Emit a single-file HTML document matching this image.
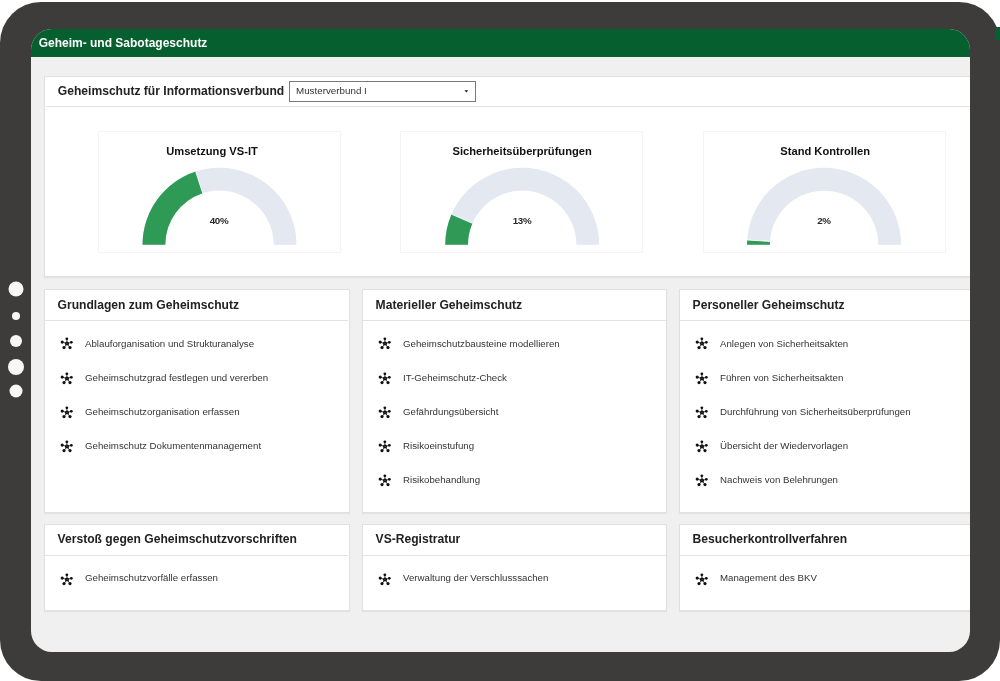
<!DOCTYPE html>
<html><head><meta charset="utf-8">
<style>
*{box-sizing:border-box;margin:0;padding:0}
html,body{width:1000px;height:681px;overflow:hidden;background:#fff;font-family:"Liberation Sans",sans-serif}
body{will-change:transform;-webkit-font-smoothing:antialiased}
.abs{position:absolute}
#frame{position:absolute;left:0;top:2px;width:1000px;height:679px;background:#3d3c3a;border-radius:41px}
#sliver{position:absolute;left:995px;top:27px;width:5px;height:13px;background:#055f2e}
#screen{position:absolute;left:31px;top:29px;width:939px;height:623px;background:#f0f0f0;border-radius:21px;overflow:hidden}
#hdr{position:absolute;left:0;top:0;width:939px;height:28.4px;background:#055f2e}
#hdr span{position:absolute;left:7.7px;top:7.7px;font-size:12px;font-weight:bold;color:#fff;line-height:12px;white-space:nowrap}
.panel{position:absolute;background:#fff;border:1px solid #e0e0e0;box-shadow:0 1px 1px rgba(0,0,0,0.05)}
.t12{font-size:12.1px;font-weight:bold;color:#222;white-space:nowrap;position:absolute;line-height:14px}
.t11{font-size:11.15px;font-weight:bold;color:#111;white-space:nowrap;position:absolute;line-height:13px}
.it{font-size:9.7px;color:#333;white-space:nowrap;position:absolute;line-height:12px}
.hline{position:absolute;height:1px;background:#e2e2e2}
.gcard{position:absolute;background:#fff;border:1px solid #f4f4f4}
.pct{position:absolute;font-size:9.8px;font-weight:bold;color:#2a2a2a;line-height:10px;white-space:nowrap;text-align:center;width:40px;letter-spacing:-0.35px}
</style></head><body>
<div id="frame"></div>
<div id="sliver"></div>
<svg class="abs" style="left:0;top:270px" width="32" height="140"><g fill="#f7f7f5"><circle cx="16" cy="19" r="7.5"/><circle cx="16" cy="46" r="4"/><circle cx="16" cy="71" r="6"/><circle cx="16" cy="97" r="8"/><circle cx="16" cy="121" r="6.5"/></g></svg>
<div id="screen">
  <div id="hdr"><span>Geheim- und Sabotageschutz</span></div>
</div>
<div class="panel" style="left:44px;top:76px;width:930px;height:201px"></div>
<div class="hline" style="left:46px;top:106px;width:924px"></div>
<div class="t12" style="left:57.8px;top:84px">Geheimschutz für Informationsverbund</div>
<div class="abs" style="left:289px;top:81px;width:187px;height:21px;border:1px solid #7a7a7a;background:#fff"></div>
<div class="it" style="left:296px;top:85.1px;color:#333;font-size:9.8px">Musterverbund I</div>
<svg class="abs" style="left:464px;top:90px" width="5" height="3"><path d="M0.5 0.2H4.1L2.3 2.4Z" fill="#111"/></svg>
<div class="gcard" style="left:98px;top:131px;width:243px;height:122px"></div>
<div class="gcard" style="left:400px;top:131px;width:243px;height:122px"></div>
<div class="gcard" style="left:703px;top:131px;width:243px;height:122px"></div>
<div class="t11" style="left:166.2px;top:144.7px">Umsetzung VS-IT</div>
<div class="t11" style="left:452.5px;top:144.5px">Sicherheitsüberprüfungen</div>
<div class="t11" style="left:780.3px;top:145.4px">Stand Kontrollen</div>
<svg class="abs" style="left:0;top:0" width="1000" height="681">
<path d="M142.50 244.80 A77 77 0 0 1 296.50 244.80 L273.70 244.80 A54.2 54.2 0 0 0 165.30 244.80 Z" fill="#e3e8f1"/>
<path d="M142.50 244.80 A77 77 0 0 1 195.71 171.57 L202.75 193.25 A54.2 54.2 0 0 0 165.30 244.80 Z" fill="#2e9a55"/>
<line x1="195.71" y1="171.57" x2="202.75" y2="193.25" stroke="#fff" stroke-width="0.9"/>
<path d="M445.20 244.80 A77 77 0 0 1 599.20 244.80 L576.40 244.80 A54.2 54.2 0 0 0 468.00 244.80 Z" fill="#e3e8f1"/>
<path d="M445.20 244.80 A77 77 0 0 1 451.53 214.22 L472.46 223.27 A54.2 54.2 0 0 0 468.00 244.80 Z" fill="#2e9a55"/>
<line x1="451.53" y1="214.22" x2="472.46" y2="223.27" stroke="#fff" stroke-width="0.9"/>
<path d="M747.10 244.80 A77 77 0 0 1 901.10 244.80 L878.30 244.80 A54.2 54.2 0 0 0 769.90 244.80 Z" fill="#e3e8f1"/>
<path d="M747.10 244.80 A77 77 0 0 1 747.25 239.97 L770.01 241.40 A54.2 54.2 0 0 0 769.90 244.80 Z" fill="#2e9a55"/>
<line x1="747.25" y1="239.97" x2="770.01" y2="241.40" stroke="#fff" stroke-width="0.9"/>
</svg>
<div class="pct" style="left:199px;top:215.6px">40%</div>
<div class="pct" style="left:502px;top:215.6px">13%</div>
<div class="pct" style="left:804px;top:215.6px">2%</div>
<div class="panel" style="left:44px;top:289px;width:306px;height:224px"></div>
<div class="hline" style="left:45px;top:320px;width:303px"></div>
<div class="t12" style="left:57.6px;top:297.6px">Grundlagen zum Geheimschutz</div>
<svg class="abs" style="left:60.1px;top:336.3px" width="14" height="14" viewBox="0 0 14 14"><g stroke="#333" stroke-width="0.9"><line x1="7" y1="7.5" x2="6.85" y2="2.80"/><line x1="7" y1="7.5" x2="2.20" y2="6.10"/><line x1="7" y1="7.5" x2="11.30" y2="6.30"/><line x1="7" y1="7.5" x2="4.00" y2="11.60"/><line x1="7" y1="7.5" x2="10.00" y2="11.60"/></g><g fill="#111"><circle cx="6.85" cy="2.80" r="1.4"/><circle cx="2.20" cy="6.10" r="1.55"/><circle cx="11.30" cy="6.30" r="1.4"/><circle cx="4.00" cy="11.60" r="1.6"/><circle cx="10.00" cy="11.60" r="1.6"/><circle cx="7" cy="7.5" r="2.05"/></g><circle cx="7" cy="7.5" r="0.6" fill="#555"/></svg>
<div class="it" style="left:85px;top:337.8px">Ablauforganisation und Strukturanalyse</div>
<svg class="abs" style="left:60.1px;top:370.5px" width="14" height="14" viewBox="0 0 14 14"><g stroke="#333" stroke-width="0.9"><line x1="7" y1="7.5" x2="6.85" y2="2.80"/><line x1="7" y1="7.5" x2="2.20" y2="6.10"/><line x1="7" y1="7.5" x2="11.30" y2="6.30"/><line x1="7" y1="7.5" x2="4.00" y2="11.60"/><line x1="7" y1="7.5" x2="10.00" y2="11.60"/></g><g fill="#111"><circle cx="6.85" cy="2.80" r="1.4"/><circle cx="2.20" cy="6.10" r="1.55"/><circle cx="11.30" cy="6.30" r="1.4"/><circle cx="4.00" cy="11.60" r="1.6"/><circle cx="10.00" cy="11.60" r="1.6"/><circle cx="7" cy="7.5" r="2.05"/></g><circle cx="7" cy="7.5" r="0.6" fill="#555"/></svg>
<div class="it" style="left:85px;top:371.9px">Geheimschutzgrad festlegen und vererben</div>
<svg class="abs" style="left:60.1px;top:404.7px" width="14" height="14" viewBox="0 0 14 14"><g stroke="#333" stroke-width="0.9"><line x1="7" y1="7.5" x2="6.85" y2="2.80"/><line x1="7" y1="7.5" x2="2.20" y2="6.10"/><line x1="7" y1="7.5" x2="11.30" y2="6.30"/><line x1="7" y1="7.5" x2="4.00" y2="11.60"/><line x1="7" y1="7.5" x2="10.00" y2="11.60"/></g><g fill="#111"><circle cx="6.85" cy="2.80" r="1.4"/><circle cx="2.20" cy="6.10" r="1.55"/><circle cx="11.30" cy="6.30" r="1.4"/><circle cx="4.00" cy="11.60" r="1.6"/><circle cx="10.00" cy="11.60" r="1.6"/><circle cx="7" cy="7.5" r="2.05"/></g><circle cx="7" cy="7.5" r="0.6" fill="#555"/></svg>
<div class="it" style="left:85px;top:405.9px">Geheimschutzorganisation erfassen</div>
<svg class="abs" style="left:60.1px;top:438.9px" width="14" height="14" viewBox="0 0 14 14"><g stroke="#333" stroke-width="0.9"><line x1="7" y1="7.5" x2="6.85" y2="2.80"/><line x1="7" y1="7.5" x2="2.20" y2="6.10"/><line x1="7" y1="7.5" x2="11.30" y2="6.30"/><line x1="7" y1="7.5" x2="4.00" y2="11.60"/><line x1="7" y1="7.5" x2="10.00" y2="11.60"/></g><g fill="#111"><circle cx="6.85" cy="2.80" r="1.4"/><circle cx="2.20" cy="6.10" r="1.55"/><circle cx="11.30" cy="6.30" r="1.4"/><circle cx="4.00" cy="11.60" r="1.6"/><circle cx="10.00" cy="11.60" r="1.6"/><circle cx="7" cy="7.5" r="2.05"/></g><circle cx="7" cy="7.5" r="0.6" fill="#555"/></svg>
<div class="it" style="left:85px;top:439.9px">Geheimschutz Dokumentenmanagement</div>
<div class="panel" style="left:362px;top:289px;width:305px;height:224px"></div>
<div class="hline" style="left:363px;top:320px;width:303px"></div>
<div class="t12" style="left:375.6px;top:297.6px">Materieller Geheimschutz</div>
<svg class="abs" style="left:378.1px;top:336.3px" width="14" height="14" viewBox="0 0 14 14"><g stroke="#333" stroke-width="0.9"><line x1="7" y1="7.5" x2="6.85" y2="2.80"/><line x1="7" y1="7.5" x2="2.20" y2="6.10"/><line x1="7" y1="7.5" x2="11.30" y2="6.30"/><line x1="7" y1="7.5" x2="4.00" y2="11.60"/><line x1="7" y1="7.5" x2="10.00" y2="11.60"/></g><g fill="#111"><circle cx="6.85" cy="2.80" r="1.4"/><circle cx="2.20" cy="6.10" r="1.55"/><circle cx="11.30" cy="6.30" r="1.4"/><circle cx="4.00" cy="11.60" r="1.6"/><circle cx="10.00" cy="11.60" r="1.6"/><circle cx="7" cy="7.5" r="2.05"/></g><circle cx="7" cy="7.5" r="0.6" fill="#555"/></svg>
<div class="it" style="left:403px;top:337.8px">Geheimschutzbausteine modellieren</div>
<svg class="abs" style="left:378.1px;top:370.5px" width="14" height="14" viewBox="0 0 14 14"><g stroke="#333" stroke-width="0.9"><line x1="7" y1="7.5" x2="6.85" y2="2.80"/><line x1="7" y1="7.5" x2="2.20" y2="6.10"/><line x1="7" y1="7.5" x2="11.30" y2="6.30"/><line x1="7" y1="7.5" x2="4.00" y2="11.60"/><line x1="7" y1="7.5" x2="10.00" y2="11.60"/></g><g fill="#111"><circle cx="6.85" cy="2.80" r="1.4"/><circle cx="2.20" cy="6.10" r="1.55"/><circle cx="11.30" cy="6.30" r="1.4"/><circle cx="4.00" cy="11.60" r="1.6"/><circle cx="10.00" cy="11.60" r="1.6"/><circle cx="7" cy="7.5" r="2.05"/></g><circle cx="7" cy="7.5" r="0.6" fill="#555"/></svg>
<div class="it" style="left:403px;top:371.9px">IT-Geheimschutz-Check</div>
<svg class="abs" style="left:378.1px;top:404.7px" width="14" height="14" viewBox="0 0 14 14"><g stroke="#333" stroke-width="0.9"><line x1="7" y1="7.5" x2="6.85" y2="2.80"/><line x1="7" y1="7.5" x2="2.20" y2="6.10"/><line x1="7" y1="7.5" x2="11.30" y2="6.30"/><line x1="7" y1="7.5" x2="4.00" y2="11.60"/><line x1="7" y1="7.5" x2="10.00" y2="11.60"/></g><g fill="#111"><circle cx="6.85" cy="2.80" r="1.4"/><circle cx="2.20" cy="6.10" r="1.55"/><circle cx="11.30" cy="6.30" r="1.4"/><circle cx="4.00" cy="11.60" r="1.6"/><circle cx="10.00" cy="11.60" r="1.6"/><circle cx="7" cy="7.5" r="2.05"/></g><circle cx="7" cy="7.5" r="0.6" fill="#555"/></svg>
<div class="it" style="left:403px;top:405.9px">Gefährdungsübersicht</div>
<svg class="abs" style="left:378.1px;top:438.9px" width="14" height="14" viewBox="0 0 14 14"><g stroke="#333" stroke-width="0.9"><line x1="7" y1="7.5" x2="6.85" y2="2.80"/><line x1="7" y1="7.5" x2="2.20" y2="6.10"/><line x1="7" y1="7.5" x2="11.30" y2="6.30"/><line x1="7" y1="7.5" x2="4.00" y2="11.60"/><line x1="7" y1="7.5" x2="10.00" y2="11.60"/></g><g fill="#111"><circle cx="6.85" cy="2.80" r="1.4"/><circle cx="2.20" cy="6.10" r="1.55"/><circle cx="11.30" cy="6.30" r="1.4"/><circle cx="4.00" cy="11.60" r="1.6"/><circle cx="10.00" cy="11.60" r="1.6"/><circle cx="7" cy="7.5" r="2.05"/></g><circle cx="7" cy="7.5" r="0.6" fill="#555"/></svg>
<div class="it" style="left:403px;top:439.9px">Risikoeinstufung</div>
<svg class="abs" style="left:378.1px;top:473.1px" width="14" height="14" viewBox="0 0 14 14"><g stroke="#333" stroke-width="0.9"><line x1="7" y1="7.5" x2="6.85" y2="2.80"/><line x1="7" y1="7.5" x2="2.20" y2="6.10"/><line x1="7" y1="7.5" x2="11.30" y2="6.30"/><line x1="7" y1="7.5" x2="4.00" y2="11.60"/><line x1="7" y1="7.5" x2="10.00" y2="11.60"/></g><g fill="#111"><circle cx="6.85" cy="2.80" r="1.4"/><circle cx="2.20" cy="6.10" r="1.55"/><circle cx="11.30" cy="6.30" r="1.4"/><circle cx="4.00" cy="11.60" r="1.6"/><circle cx="10.00" cy="11.60" r="1.6"/><circle cx="7" cy="7.5" r="2.05"/></g><circle cx="7" cy="7.5" r="0.6" fill="#555"/></svg>
<div class="it" style="left:403px;top:474.0px">Risikobehandlung</div>
<div class="panel" style="left:679px;top:289px;width:305px;height:224px"></div>
<div class="hline" style="left:680px;top:320px;width:303px"></div>
<div class="t12" style="left:692.6px;top:297.6px">Personeller Geheimschutz</div>
<svg class="abs" style="left:695.1px;top:336.3px" width="14" height="14" viewBox="0 0 14 14"><g stroke="#333" stroke-width="0.9"><line x1="7" y1="7.5" x2="6.85" y2="2.80"/><line x1="7" y1="7.5" x2="2.20" y2="6.10"/><line x1="7" y1="7.5" x2="11.30" y2="6.30"/><line x1="7" y1="7.5" x2="4.00" y2="11.60"/><line x1="7" y1="7.5" x2="10.00" y2="11.60"/></g><g fill="#111"><circle cx="6.85" cy="2.80" r="1.4"/><circle cx="2.20" cy="6.10" r="1.55"/><circle cx="11.30" cy="6.30" r="1.4"/><circle cx="4.00" cy="11.60" r="1.6"/><circle cx="10.00" cy="11.60" r="1.6"/><circle cx="7" cy="7.5" r="2.05"/></g><circle cx="7" cy="7.5" r="0.6" fill="#555"/></svg>
<div class="it" style="left:720px;top:337.8px">Anlegen von Sicherheitsakten</div>
<svg class="abs" style="left:695.1px;top:370.5px" width="14" height="14" viewBox="0 0 14 14"><g stroke="#333" stroke-width="0.9"><line x1="7" y1="7.5" x2="6.85" y2="2.80"/><line x1="7" y1="7.5" x2="2.20" y2="6.10"/><line x1="7" y1="7.5" x2="11.30" y2="6.30"/><line x1="7" y1="7.5" x2="4.00" y2="11.60"/><line x1="7" y1="7.5" x2="10.00" y2="11.60"/></g><g fill="#111"><circle cx="6.85" cy="2.80" r="1.4"/><circle cx="2.20" cy="6.10" r="1.55"/><circle cx="11.30" cy="6.30" r="1.4"/><circle cx="4.00" cy="11.60" r="1.6"/><circle cx="10.00" cy="11.60" r="1.6"/><circle cx="7" cy="7.5" r="2.05"/></g><circle cx="7" cy="7.5" r="0.6" fill="#555"/></svg>
<div class="it" style="left:720px;top:371.9px">Führen von Sicherheitsakten</div>
<svg class="abs" style="left:695.1px;top:404.7px" width="14" height="14" viewBox="0 0 14 14"><g stroke="#333" stroke-width="0.9"><line x1="7" y1="7.5" x2="6.85" y2="2.80"/><line x1="7" y1="7.5" x2="2.20" y2="6.10"/><line x1="7" y1="7.5" x2="11.30" y2="6.30"/><line x1="7" y1="7.5" x2="4.00" y2="11.60"/><line x1="7" y1="7.5" x2="10.00" y2="11.60"/></g><g fill="#111"><circle cx="6.85" cy="2.80" r="1.4"/><circle cx="2.20" cy="6.10" r="1.55"/><circle cx="11.30" cy="6.30" r="1.4"/><circle cx="4.00" cy="11.60" r="1.6"/><circle cx="10.00" cy="11.60" r="1.6"/><circle cx="7" cy="7.5" r="2.05"/></g><circle cx="7" cy="7.5" r="0.6" fill="#555"/></svg>
<div class="it" style="left:720px;top:405.9px">Durchführung von Sicherheitsüberprüfungen</div>
<svg class="abs" style="left:695.1px;top:438.9px" width="14" height="14" viewBox="0 0 14 14"><g stroke="#333" stroke-width="0.9"><line x1="7" y1="7.5" x2="6.85" y2="2.80"/><line x1="7" y1="7.5" x2="2.20" y2="6.10"/><line x1="7" y1="7.5" x2="11.30" y2="6.30"/><line x1="7" y1="7.5" x2="4.00" y2="11.60"/><line x1="7" y1="7.5" x2="10.00" y2="11.60"/></g><g fill="#111"><circle cx="6.85" cy="2.80" r="1.4"/><circle cx="2.20" cy="6.10" r="1.55"/><circle cx="11.30" cy="6.30" r="1.4"/><circle cx="4.00" cy="11.60" r="1.6"/><circle cx="10.00" cy="11.60" r="1.6"/><circle cx="7" cy="7.5" r="2.05"/></g><circle cx="7" cy="7.5" r="0.6" fill="#555"/></svg>
<div class="it" style="left:720px;top:439.9px">Übersicht der Wiedervorlagen</div>
<svg class="abs" style="left:695.1px;top:473.1px" width="14" height="14" viewBox="0 0 14 14"><g stroke="#333" stroke-width="0.9"><line x1="7" y1="7.5" x2="6.85" y2="2.80"/><line x1="7" y1="7.5" x2="2.20" y2="6.10"/><line x1="7" y1="7.5" x2="11.30" y2="6.30"/><line x1="7" y1="7.5" x2="4.00" y2="11.60"/><line x1="7" y1="7.5" x2="10.00" y2="11.60"/></g><g fill="#111"><circle cx="6.85" cy="2.80" r="1.4"/><circle cx="2.20" cy="6.10" r="1.55"/><circle cx="11.30" cy="6.30" r="1.4"/><circle cx="4.00" cy="11.60" r="1.6"/><circle cx="10.00" cy="11.60" r="1.6"/><circle cx="7" cy="7.5" r="2.05"/></g><circle cx="7" cy="7.5" r="0.6" fill="#555"/></svg>
<div class="it" style="left:720px;top:474.0px">Nachweis von Belehrungen</div>
<div class="panel" style="left:44px;top:524px;width:306px;height:87px"></div>
<div class="hline" style="left:45px;top:555px;width:303px"></div>
<div class="t12" style="left:57.6px;top:532.35px">Verstoß gegen Geheimschutzvorschriften</div>
<svg class="abs" style="left:60.1px;top:571.9px" width="14" height="14" viewBox="0 0 14 14"><g stroke="#333" stroke-width="0.9"><line x1="7" y1="7.5" x2="6.85" y2="2.80"/><line x1="7" y1="7.5" x2="2.20" y2="6.10"/><line x1="7" y1="7.5" x2="11.30" y2="6.30"/><line x1="7" y1="7.5" x2="4.00" y2="11.60"/><line x1="7" y1="7.5" x2="10.00" y2="11.60"/></g><g fill="#111"><circle cx="6.85" cy="2.80" r="1.4"/><circle cx="2.20" cy="6.10" r="1.55"/><circle cx="11.30" cy="6.30" r="1.4"/><circle cx="4.00" cy="11.60" r="1.6"/><circle cx="10.00" cy="11.60" r="1.6"/><circle cx="7" cy="7.5" r="2.05"/></g><circle cx="7" cy="7.5" r="0.6" fill="#555"/></svg>
<div class="it" style="left:85px;top:572.3px">Geheimschutzvorfälle erfassen</div>
<div class="panel" style="left:362px;top:524px;width:305px;height:87px"></div>
<div class="hline" style="left:363px;top:555px;width:303px"></div>
<div class="t12" style="left:375.6px;top:532.35px">VS-Registratur</div>
<svg class="abs" style="left:378.1px;top:571.9px" width="14" height="14" viewBox="0 0 14 14"><g stroke="#333" stroke-width="0.9"><line x1="7" y1="7.5" x2="6.85" y2="2.80"/><line x1="7" y1="7.5" x2="2.20" y2="6.10"/><line x1="7" y1="7.5" x2="11.30" y2="6.30"/><line x1="7" y1="7.5" x2="4.00" y2="11.60"/><line x1="7" y1="7.5" x2="10.00" y2="11.60"/></g><g fill="#111"><circle cx="6.85" cy="2.80" r="1.4"/><circle cx="2.20" cy="6.10" r="1.55"/><circle cx="11.30" cy="6.30" r="1.4"/><circle cx="4.00" cy="11.60" r="1.6"/><circle cx="10.00" cy="11.60" r="1.6"/><circle cx="7" cy="7.5" r="2.05"/></g><circle cx="7" cy="7.5" r="0.6" fill="#555"/></svg>
<div class="it" style="left:403px;top:572.3px">Verwaltung der Verschlusssachen</div>
<div class="panel" style="left:679px;top:524px;width:305px;height:87px"></div>
<div class="hline" style="left:680px;top:555px;width:303px"></div>
<div class="t12" style="left:692.6px;top:532.35px">Besucherkontrollverfahren</div>
<svg class="abs" style="left:695.1px;top:571.9px" width="14" height="14" viewBox="0 0 14 14"><g stroke="#333" stroke-width="0.9"><line x1="7" y1="7.5" x2="6.85" y2="2.80"/><line x1="7" y1="7.5" x2="2.20" y2="6.10"/><line x1="7" y1="7.5" x2="11.30" y2="6.30"/><line x1="7" y1="7.5" x2="4.00" y2="11.60"/><line x1="7" y1="7.5" x2="10.00" y2="11.60"/></g><g fill="#111"><circle cx="6.85" cy="2.80" r="1.4"/><circle cx="2.20" cy="6.10" r="1.55"/><circle cx="11.30" cy="6.30" r="1.4"/><circle cx="4.00" cy="11.60" r="1.6"/><circle cx="10.00" cy="11.60" r="1.6"/><circle cx="7" cy="7.5" r="2.05"/></g><circle cx="7" cy="7.5" r="0.6" fill="#555"/></svg>
<div class="it" style="left:720px;top:572.3px">Management des BKV</div>
<div class="abs" style="left:970px;top:40px;width:30px;height:600px;background:#3d3c3a"></div>
</body></html>
